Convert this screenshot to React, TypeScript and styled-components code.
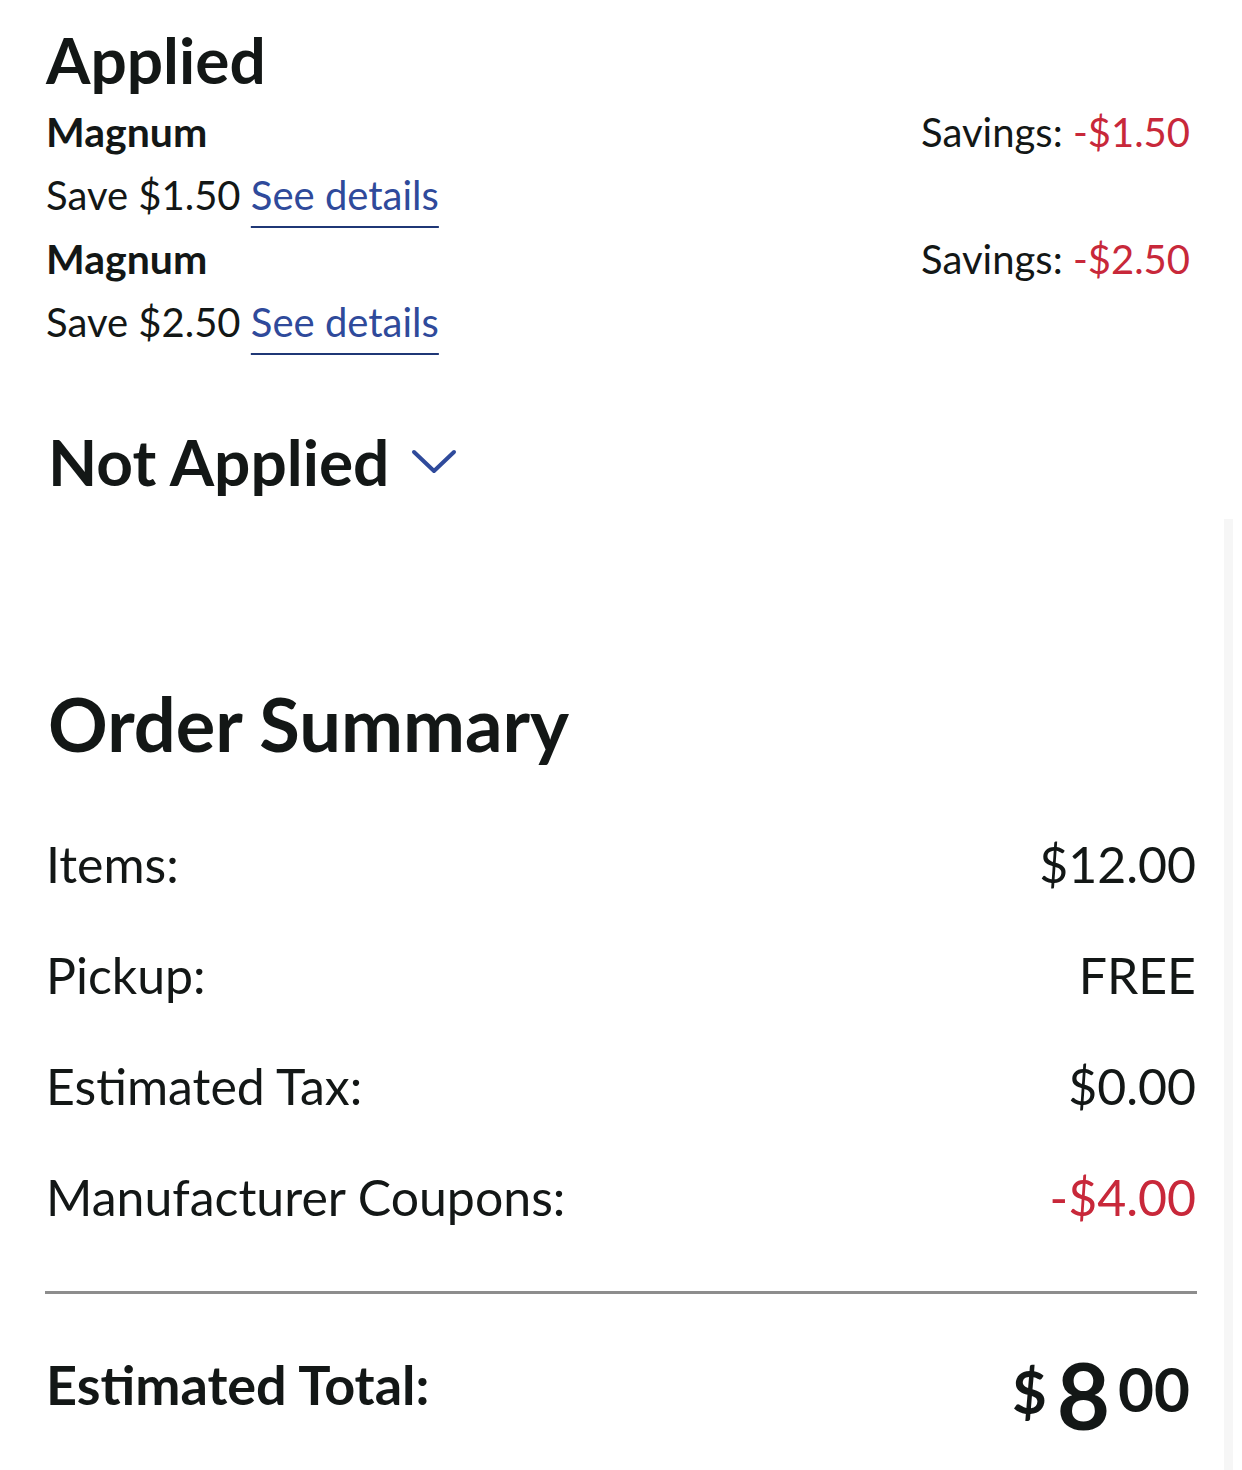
import React from 'react';
import styled, { createGlobalStyle } from 'styled-components';

const GlobalStyle = createGlobalStyle`
    html, body {
        margin: 0;
        padding: 0;
        background: #fff;
    }
    body {
        font-family: Lato, "Noto Sans", "Liberation Sans", sans-serif;
        color: #131716;
    }
`;

const Page = styled('div')`
    width: 1242px;
    min-height: 1470px;
    overflow: hidden;
`;

const CouponSection = styled('section')`
    padding: 20px 52px 0 46px;
`;

const SectionTitle = styled('h2')`
    margin: 0;
    font-size: 64px;
    font-weight: 700;
    line-height: 80px;
`;

const CouponRow = styled('div')`
    display: flex;
    justify-content: space-between;
    align-items: baseline;
    font-size: 40px;
    line-height: 63px;
`;

const CouponName = styled('span')`
    font-size: 41px;
    font-weight: 700;
`;

const Savings = styled('span')`
    font-weight: 400;
`;

const Red = styled('span')`
    color: #c8283a;
`;

const CouponDesc = styled('div')`
    font-size: 40px;
    line-height: 63px;
`;

const DetailsLink = styled('a')`
    color: #2f4a9b;
    text-decoration: underline;
    text-decoration-color: #1f3776;
    text-decoration-thickness: 2px;
    text-underline-offset: 16px;
    cursor: pointer;
`;

const ToggleRow = styled('button')`
    display: flex;
    align-items: center;
    gap: 22px;
    margin: 70px 0 0 2px;
    padding: 0;
    background: none;
    border: none;
    font-family: inherit;
    color: #131716;
    font-size: 64px;
    font-weight: 700;
    line-height: 76px;
    cursor: pointer;
`;

const SummaryPanel = styled('section')`
    margin: 19px 9px 0 0;
    padding: 160px 28px 40px 46px;
    border-right: 9px solid #f6f6f6;
`;

const SummaryTitle = styled('h2')`
    margin: 0 0 0 2px;
    font-size: 74px;
    font-weight: 700;
    line-height: 90px;
`;

const SummaryRows = styled('div')`
    display: flex;
    flex-direction: column;
    margin-top: 40px;
`;

const SummaryRow = styled('div')`
    display: flex;
    justify-content: space-between;
    align-items: baseline;
    font-size: 50px;
    line-height: 111px;
`;

const Negative = styled('span')`
    color: #c8283a;
`;

const Divider = styled('hr')`
    margin: 38px -1px 0 -1px;
    border: none;
    height: 3px;
    background: #8d8d8d;
`;

const TotalRow = styled('div')`
    display: flex;
    justify-content: space-between;
    align-items: flex-end;
    padding: 55px 6px 0 0;
`;

const TotalLabel = styled('span')`
    font-size: 54px;
    font-weight: 700;
    line-height: 1;
    margin-bottom: 29px;
`;

const Price = styled('span')`
    display: flex;
    align-items: flex-start;
    font-weight: 700;
    line-height: 1;
`;

const Dollar = styled('span')`
    font-size: 60px;
    margin-top: 12px;
    margin-right: 10px;
`;

const Whole = styled('span')`
    font-size: 92px;
`;

const Cents = styled('span')`
    font-size: 62px;
    margin-top: 8px;
    margin-left: 8px;
`;

const Chevron = () => (
    <svg width="46" height="26" viewBox="0 0 46 26" fill="none">
        <path d="M3 3 L23 22 L43 3" stroke="#2f4a9b" strokeWidth="4" strokeLinecap="round" strokeLinejoin="round" />
    </svg>
);

const coupons = [
    { name: 'Magnum', amount: '1.50' },
    { name: 'Magnum', amount: '2.50' },
];

const rows = [
    { label: 'Items:', value: '$12.00' },
    { label: 'Pickup:', value: 'FREE' },
    { label: 'Estimated Tax:', value: '$0.00' },
    { label: 'Manufacturer Coupons:', value: '-$4.00', negative: true },
];

const App = () => (
    <Page>
        <GlobalStyle />
        <CouponSection>
            <SectionTitle>Applied</SectionTitle>
            {coupons.map((c, i) => (
                <div key={i}>
                    <CouponRow>
                        <CouponName>{c.name}</CouponName>
                        <Savings>Savings: <Red>-${c.amount}</Red></Savings>
                    </CouponRow>
                    <CouponDesc>
                        Save ${c.amount} <DetailsLink>See details</DetailsLink>
                    </CouponDesc>
                </div>
            ))}
            <ToggleRow>
                Not Applied
                <Chevron />
            </ToggleRow>
        </CouponSection>
        <SummaryPanel>
            <SummaryTitle>Order Summary</SummaryTitle>
            <SummaryRows>
                {rows.map(r => (
                    <SummaryRow key={r.label}>
                        <span>{r.label}</span>
                        {r.negative ? <Negative>{r.value}</Negative> : <span>{r.value}</span>}
                    </SummaryRow>
                ))}
            </SummaryRows>
            <Divider />
            <TotalRow>
                <TotalLabel>Estimated Total:</TotalLabel>
                <Price>
                    <Dollar>$</Dollar>
                    <Whole>8</Whole>
                    <Cents>00</Cents>
                </Price>
            </TotalRow>
        </SummaryPanel>
    </Page>
);

export default App;
